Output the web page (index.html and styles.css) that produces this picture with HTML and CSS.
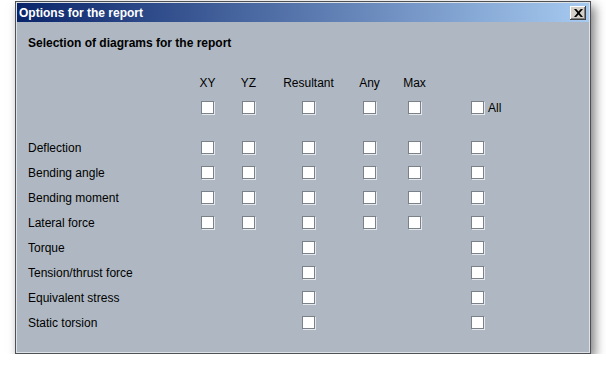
FILE: index.html
```html
<!DOCTYPE html>
<html lang="en">
<head>
    <meta charset="UTF-8">
    <title>Options for the report</title>
    <link rel="stylesheet" href="styles.css">
</head>
<body>

    <div class="window">
        <div class="titlebar">
            <span class="title">Options for the report</span>
            <button class="close" type="button">
                <svg width="9" height="8" viewBox="0 0 9 8"><path d="M0 0h2.2l2.3 2.6L6.8 0H9L5.6 4 9 8H6.8L4.5 5.4 2.2 8H0l3.4-4z" fill="#000"/></svg>
            </button>
        </div>

        <div class="content">
            <h2 class="heading">Selection of diagrams for the report</h2>

            <div class="grid">
                <div></div>
                <div class="head">XY</div>
                <div class="head">YZ</div>
                <div class="head">Resultant</div>
                <div class="head">Any</div>
                <div class="head">Max</div>
                <div></div>

                <div></div>
                <input class="cb" type="checkbox">
                <input class="cb" type="checkbox">
                <input class="cb" type="checkbox">
                <input class="cb" type="checkbox">
                <input class="cb" type="checkbox">
                <label class="all"><input class="cb" type="checkbox"> All</label>

                <div class="spacer"></div>

                <div class="label">Deflection</div>
                <input class="cb" type="checkbox">
                <input class="cb" type="checkbox">
                <input class="cb" type="checkbox">
                <input class="cb" type="checkbox">
                <input class="cb" type="checkbox">
                <input class="cb" type="checkbox">

                <div class="label">Bending angle</div>
                <input class="cb" type="checkbox">
                <input class="cb" type="checkbox">
                <input class="cb" type="checkbox">
                <input class="cb" type="checkbox">
                <input class="cb" type="checkbox">
                <input class="cb" type="checkbox">

                <div class="label">Bending moment</div>
                <input class="cb" type="checkbox">
                <input class="cb" type="checkbox">
                <input class="cb" type="checkbox">
                <input class="cb" type="checkbox">
                <input class="cb" type="checkbox">
                <input class="cb" type="checkbox">

                <div class="label">Lateral force</div>
                <input class="cb" type="checkbox">
                <input class="cb" type="checkbox">
                <input class="cb" type="checkbox">
                <input class="cb" type="checkbox">
                <input class="cb" type="checkbox">
                <input class="cb" type="checkbox">

                <div class="label">Torque</div>
                <div></div><div></div>
                <input class="cb" type="checkbox">
                <div></div><div></div>
                <input class="cb" type="checkbox">

                <div class="label">Tension/thrust force</div>
                <div></div><div></div>
                <input class="cb" type="checkbox">
                <div></div><div></div>
                <input class="cb" type="checkbox">

                <div class="label">Equivalent stress</div>
                <div></div><div></div>
                <input class="cb" type="checkbox">
                <div></div><div></div>
                <input class="cb" type="checkbox">

                <div class="label">Static torsion</div>
                <div></div><div></div>
                <input class="cb" type="checkbox">
                <div></div><div></div>
                <input class="cb" type="checkbox">
            </div>
        </div>
    </div>

</body>
</html>
```

FILE: styles.css
```css
*{
    margin: 0;
    padding: 0;
    box-sizing: border-box;
}

body{
    background-color: #fff;
    font-family: "Liberation Sans", Arial, sans-serif;
    font-size: 12px;
    color: #000;
}

.window{
    width: 576px;
    height: 353px;
    margin: 1px 0 0 15px;
    border: 1px solid #4e5054;
    padding: 1px;
    background-color: #dde2e7;
    box-shadow: 4px 5px 10px rgba(0, 0, 0, 0.5);
    display: flex;
    flex-direction: column;
}

.titlebar{
    height: 19px;
    background: linear-gradient(to right, #0a246a, #a6caf0);
    display: flex;
    align-items: center;
    justify-content: space-between;
    padding: 0 3px 0 2px;
}

.title{
    color: #fff;
    font-weight: bold;
    font-size: 12px;
}

.close{
    width: 16px;
    height: 14px;
    border: none;
    background-color: #d4d0c8;
    box-shadow: inset -1px -1px 0 #404040, inset 1px 1px 0 #fff, inset -2px -2px 0 #808080;
    display: flex;
    align-items: center;
    justify-content: center;
}

.content{
    flex: 1;
    background-color: #afb8c2;
    padding: 14px 0 0 11px;
}

.heading{
    font-size: 12px;
    font-weight: bold;
    line-height: 14px;
}

.grid{
    margin-top: 20px;
    display: grid;
    grid-template-columns: 173px 41px 60px 61px 45px 63px auto;
    grid-template-rows: 25px 25px 15px repeat(8, 25px);
    align-items: center;
    justify-items: start;
}

.spacer{
    grid-column: 1 / -1;
}

.head{
    width: 13px;
    display: flex;
    justify-content: center;
    white-space: nowrap;
}

.label{
    white-space: nowrap;
}

.cb{
    appearance: none;
    width: 13px;
    height: 13px;
    border: 1px solid #7b8189;
    background-color: #fff;
    box-shadow: 1px 1px 0 #e4e8ec;
    display: block;
}

.all{
    display: flex;
    align-items: center;
    gap: 4px;
}
```
